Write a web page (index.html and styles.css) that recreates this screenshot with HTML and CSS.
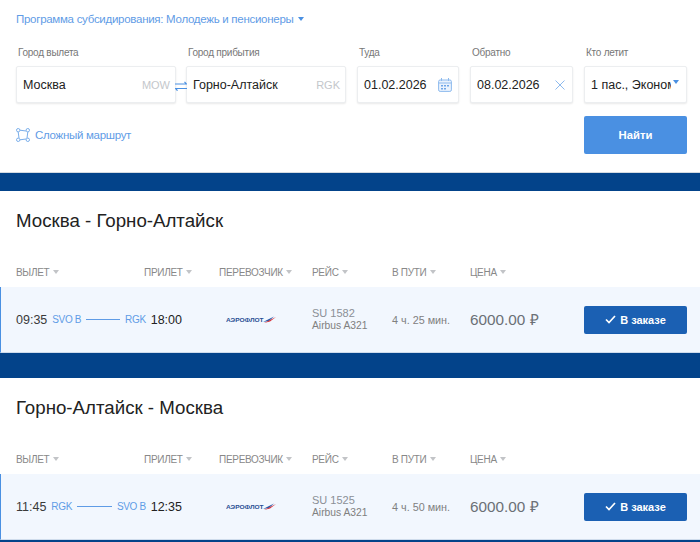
FILE: index.html
```html
<!DOCTYPE html>
<html lang="ru">
<head>
<meta charset="utf-8">
<title>Поиск рейсов</title>
<link rel="stylesheet" href="styles.css">
</head>
<body>
<form class="search">
  <div class="program">Программа субсидирования: Молодежь и пенсионеры <span class="caret caret-blue"></span></div>
  <div class="fields">
    <div class="field">
      <div class="label">Город вылета</div>
      <div class="box"><span class="value">Москва</span><span class="code">MOW</span></div>
    </div>
    <div class="swap">
      <svg width="12" height="10" viewBox="0 0 12 10"><path d="M0 3h11.5L9.5 .8M12 7.5H.5L2.5 9.7" fill="none" stroke="#4a90e2" stroke-width="1.2"/></svg>
    </div>
    <div class="field">
      <div class="label">Город прибытия</div>
      <div class="box"><span class="value">Горно-Алтайск</span><span class="code">RGK</span></div>
    </div>
    <div class="field">
      <div class="label">Туда</div>
      <div class="box"><span class="value">01.02.2026</span>
        <svg width="14" height="14" viewBox="0 0 14 14" class="box-icon"><rect x=".6" y="2" width="12.8" height="11.4" rx="1.5" fill="#eaf2fc" stroke="#8dbaee"/><path d="M.6 5h12.8M3.5 0v3M10.5 0v3" stroke="#8dbaee" fill="none"/><path d="M3 7h2v1.6H3zM6 7h2v1.6H6zM9 7h2v1.6H9zM3 10h2v1.6H3zM6 10h2v1.6H6z" fill="#6ea6e8"/></svg>
      </div>
    </div>
    <div class="field">
      <div class="label">Обратно</div>
      <div class="box"><span class="value">08.02.2026</span>
        <svg width="10" height="10" viewBox="0 0 10 10" class="box-icon clear"><path d="M.5.5l9 9M9.5.5l-9 9" stroke="#8dbaee" fill="none"/></svg>
      </div>
    </div>
    <div class="field">
      <div class="label">Кто летит</div>
      <div class="box pax"><span class="value clip">1 пас., Эконом</span><span class="caret caret-blue pax-caret"></span></div>
    </div>
  </div>
  <div class="actions">
    <a class="route">
      <svg width="14" height="14" viewBox="0 0 14 14"><g fill="none" stroke="#7aaeea"><path d="M2.2 4 3 10M11.8 4 11 10M4 2.2l6 .8M4 11.8l6-.8"/><circle cx="2.2" cy="2.2" r="1.7"/><circle cx="11.8" cy="2.2" r="1.7"/><circle cx="2.2" cy="11.8" r="1.7"/><circle cx="11.8" cy="11.8" r="1.7"/></g></svg>
      Сложный маршрут
    </a>
    <button type="button" class="find">Найти</button>
  </div>
</form>

<div class="band band-top"></div>

<section class="leg">
  <h2 class="leg-title">Москва - Горно-Алтайск</h2>
  <div class="cols head">
    <div>ВЫЛЕТ <span class="caret"></span></div>
    <div>ПРИЛЕТ <span class="caret"></span></div>
    <div>ПЕРЕВОЗЧИК <span class="caret"></span></div>
    <div>РЕЙС <span class="caret"></span></div>
    <div>В ПУТИ <span class="caret"></span></div>
    <div>ЦЕНА <span class="caret"></span></div>
  </div>
  <div class="cols flight">
    <div class="times">
      <span class="time">09:35</span><span class="port">SVO B</span><span class="line"></span><span class="port">RGK</span><span class="time dark">18:00</span>
    </div>
    <div class="logo"><span class="logo-text">АЭРОФЛОТ</span><svg width="13" height="7" viewBox="0 0 13 7"><path d="M0 6 11 .5 6 5z" fill="#2a5aa8"/><path d="M1 7 13 1 7 5.6z" fill="#d8333a"/></svg></div>
    <div class="flightno"><div>SU 1582</div><div class="plane">Airbus A321</div></div>
    <div class="dur">4 ч. 25 мин.</div>
    <div class="price">6000.00 ₽</div>
    <button type="button" class="order"><svg width="11" height="9" viewBox="0 0 11 9"><path d="M1 4.5 4 7.5 10 1" fill="none" stroke="#fff" stroke-width="1.7"/></svg>В заказе</button>
  </div>
</section>

<div class="band band-mid"></div>

<section class="leg">
  <h2 class="leg-title">Горно-Алтайск - Москва</h2>
  <div class="cols head">
    <div>ВЫЛЕТ <span class="caret"></span></div>
    <div>ПРИЛЕТ <span class="caret"></span></div>
    <div>ПЕРЕВОЗЧИК <span class="caret"></span></div>
    <div>РЕЙС <span class="caret"></span></div>
    <div>В ПУТИ <span class="caret"></span></div>
    <div>ЦЕНА <span class="caret"></span></div>
  </div>
  <div class="cols flight">
    <div class="times">
      <span class="time">11:45</span><span class="port">RGK</span><span class="line"></span><span class="port">SVO B</span><span class="time dark">12:35</span>
    </div>
    <div class="logo"><span class="logo-text">АЭРОФЛОТ</span><svg width="13" height="7" viewBox="0 0 13 7"><path d="M0 6 11 .5 6 5z" fill="#2a5aa8"/><path d="M1 7 13 1 7 5.6z" fill="#d8333a"/></svg></div>
    <div class="flightno"><div>SU 1525</div><div class="plane">Airbus A321</div></div>
    <div class="dur">4 ч. 50 мин.</div>
    <div class="price">6000.00 ₽</div>
    <button type="button" class="order"><svg width="11" height="9" viewBox="0 0 11 9"><path d="M1 4.5 4 7.5 10 1" fill="none" stroke="#fff" stroke-width="1.7"/></svg>В заказе</button>
  </div>
</section>
<div class="band band-end"></div>
</body>
</html>
```
FILE: styles.css
```css
* { box-sizing: border-box; }
html, body { margin: 0; height: 542px; overflow: hidden; }
body { background: #fff; font-family: "Liberation Sans", Arial, sans-serif; color: #222; }

.search { height: 173px; padding: 11px 13px 0 16px; border-bottom: 1px solid #d5dbe2; }
.program { font-size: 11.5px; line-height: 16px; color: #5f9ce6; letter-spacing: -.28px; }
.caret { display: inline-block; width: 0; height: 0; border: 3px solid transparent; border-top: 4px solid #c2c4c7; border-bottom: 0; vertical-align: 2px; margin-left: 1px; }
.caret-blue { border-top-color: #4a90e2; margin-left: 2px; }

.fields { display: flex; margin-top: 19px; }
.field { width: 103px; margin-right: 11px; }
.field:nth-child(1) { width: 160px; margin-right: 0; }
.field:nth-child(3) { width: 160px; }
.field:last-child { width: 103px; margin-right: 0; }
.field:nth-child(4) { width: 102px; }
.field:nth-child(5) { width: 103px; }
.swap { width: 10px; position: relative; }
.swap svg { position: absolute; left: -1px; top: 35px; z-index: 1; }
.label { font-size: 10px; line-height: 14px; color: #777; padding-left: 2px; height: 20px; letter-spacing: -.25px; }
.box { height: 37px; background: #fff; border: 1px solid #eceef0; border-radius: 2px; box-shadow: 0 1px 2px rgba(0,0,0,.09); display: flex; align-items: center; justify-content: space-between; padding: 0 5px 0 6px; font-size: 12.5px; }
.value { color: #222; white-space: nowrap; }
.code { color: #c4c7cb; font-size: 11px; }
.box-icon { margin-right: 1px; }
.clear { margin-right: 2px; }
.pax { position: relative; }
.clip { overflow: hidden; width: 80px; }
.pax-caret { position: absolute; right: 7px; top: 13px; margin: 0; }

.actions { display: flex; justify-content: space-between; align-items: center; margin-top: 13px; }
.route { display: flex; align-items: center; gap: 5px; font-size: 11.5px; color: #5f9ce6; letter-spacing: -.3px; }
.find { width: 103px; height: 38px; background: #4a90e2; border: 0; border-radius: 2px; color: #fff; font: 700 11.3px "Liberation Sans", Arial, sans-serif; }

.band { background: #03438a; }
.band-top { height: 18px; }
.band-mid { height: 25px; }
.band-end { height: 2px; }

.leg-title { margin: 0; font-size: 18.7px; font-weight: 400; line-height: 24px; color: #222; padding: 18px 0 0 16px; height: 63px; }
.cols { display: grid; grid-template-columns: 128px 75px 93px 80px 78px 114px 103px; padding-left: 16px; }
.head { height: 33px; padding-top: 12px; font-size: 10px; line-height: 14px; color: #888; letter-spacing: -.3px; }
.flight { height: 66px; background: #f2f7fe; border-left: 1px solid #4a90e2; border-bottom: 1px solid #cfdcec; padding-left: 15px; align-items: center; letter-spacing: 0; }
.times { grid-column: 1 / span 2; display: flex; align-items: center; width: 166px; }
.time { color: #3a3a3a; font-size: 12.5px; }
.time.dark { color: #222; }
.port { color: #5f9ce6; font-size: 10px; margin: 0 5px; letter-spacing: -.35px; }
.line { flex: 1; height: 1px; background: #5f9ce6; }
.logo { display: flex; align-items: center; padding-left: 7px; }
.logo-text { font-size: 5.6px; font-weight: 700; color: #2a4f94; transform: scaleX(1.17); transform-origin: left; margin-right: 5px; }
.flightno { font-size: 11px; line-height: 12px; color: #8a8f96; }
.plane { font-size: 10.3px; color: #808080; margin-top: 1px; }
.dur { font-size: 10.8px; color: #808080; }
.price { font-size: 15.3px; color: #6b7076; line-height: 16px; }
.order { width: 103px; height: 28px; background: #1b60b3; border: 0; border-radius: 2px; color: #fff; font: 700 11px "Liberation Sans", Arial, sans-serif; display: flex; align-items: center; justify-content: center; gap: 4px; }
```
